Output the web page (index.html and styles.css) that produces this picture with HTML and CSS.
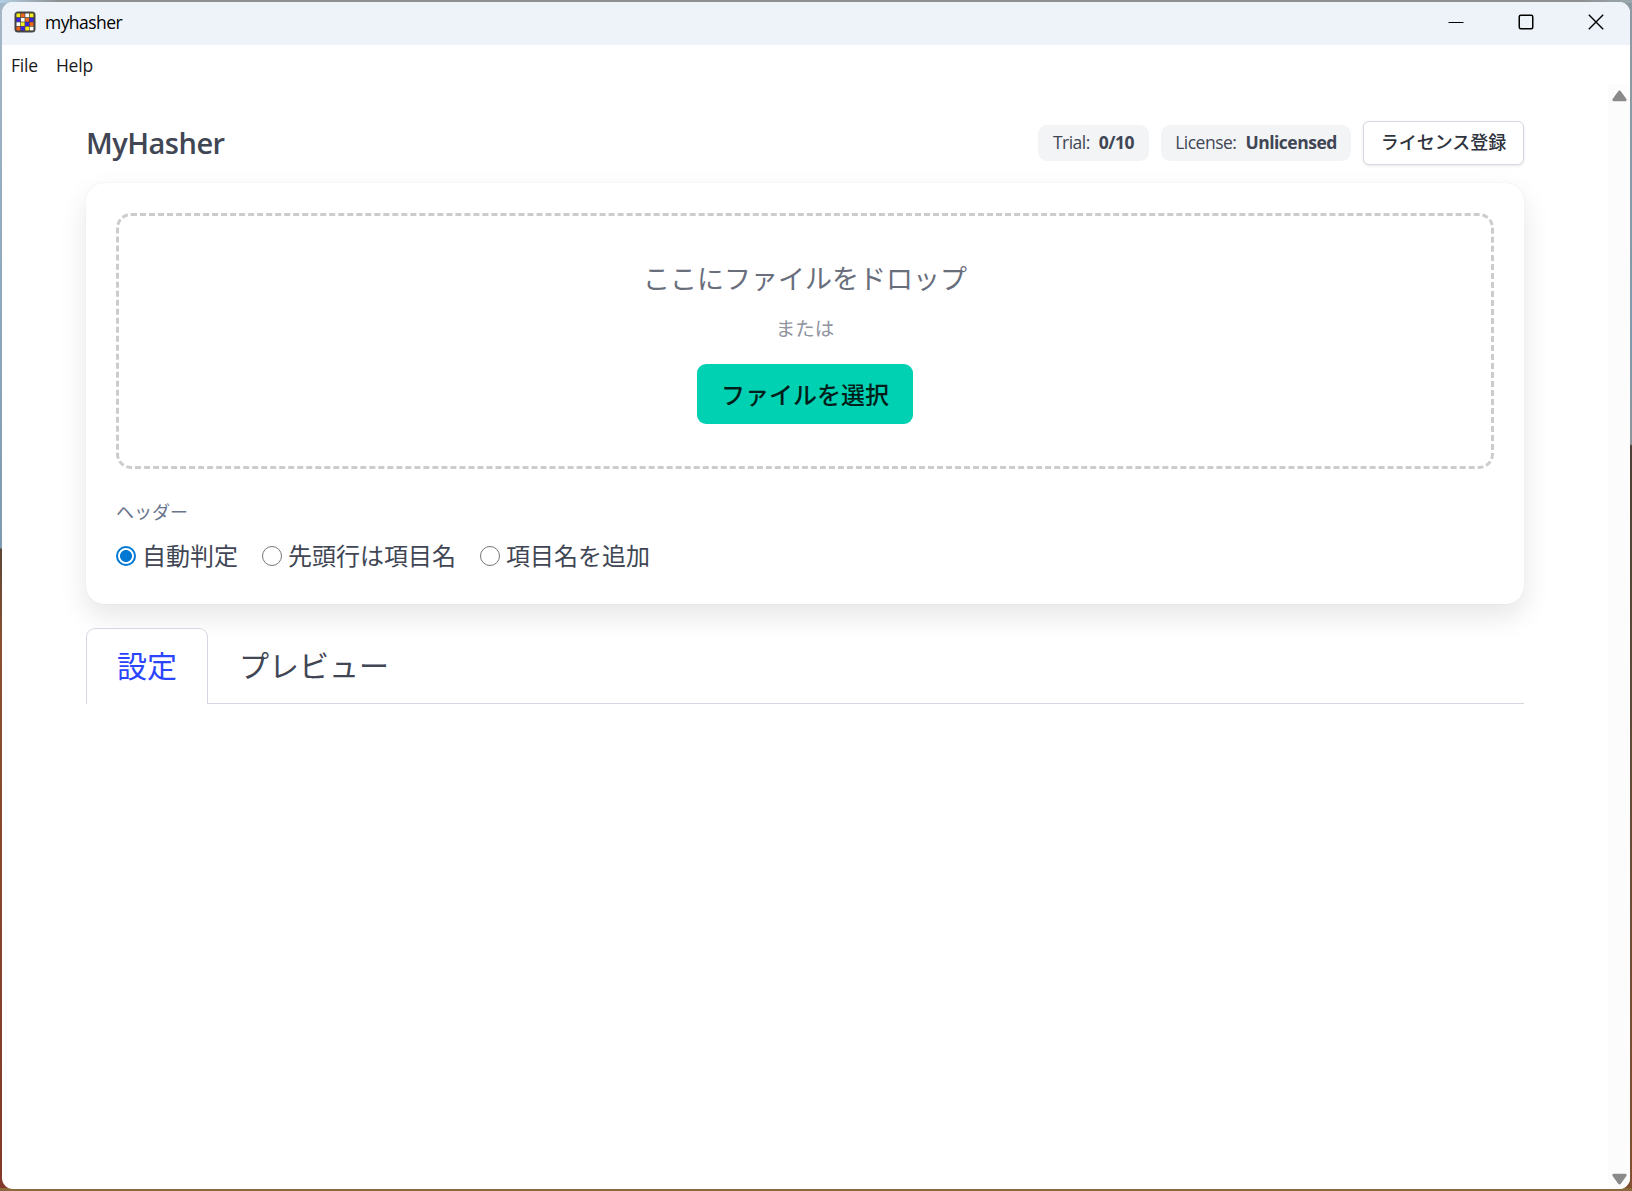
FILE: index.html
```
<!DOCTYPE html>
<html lang="ja">
<head>
    <meta charset="UTF-8">
    <meta name="viewport" content="width=device-width, initial-scale=1.0">
    <title>myhasher</title>
    <link rel="stylesheet" href="styles.css">
</head>
<body>
    <div class="window">
        <header class="titlebar">
            <svg class="app-icon" width="22" height="22" viewBox="0 0 22 22">
                <rect x="0.5" y="0.5" width="21" height="21" rx="3.5" fill="#444"/>
                <g fill="#f4ee1c">
                    <rect x="2.5" y="2.5" width="3.7" height="3.7"/>
                    <rect x="15.7" y="2.5" width="3.7" height="3.7"/>
                    <rect x="6.9" y="11.3" width="3.7" height="3.7"/>
                    <rect x="11.3" y="15.7" width="3.7" height="3.7"/>
                </g>
                <g fill="#f26419">
                    <rect x="6.9" y="2.5" width="3.7" height="3.7"/>
                    <rect x="11.3" y="6.9" width="3.7" height="3.7"/>
                    <rect x="15.7" y="11.3" width="3.7" height="3.7"/>
                    <rect x="2.5" y="15.7" width="3.7" height="3.7"/>
                </g>
                <g fill="#3a22e8">
                    <rect x="2.5" y="6.9" width="3.7" height="3.7"/>
                    <rect x="15.7" y="6.9" width="3.7" height="3.7"/>
                    <rect x="11.3" y="11.3" width="3.7" height="3.7"/>
                    <rect x="6.9" y="15.7" width="3.7" height="3.7"/>
                </g>
                <g fill="#fff">
                    <rect x="11.3" y="2.5" width="3.7" height="3.7"/>
                    <rect x="6.9" y="6.9" width="3.7" height="3.7"/>
                    <rect x="2.5" y="11.3" width="3.7" height="3.7"/>
                    <rect x="15.7" y="15.7" width="3.7" height="3.7"/>
                </g>
            </svg>
            <span class="app-name">myhasher</span>
            <div class="controls">
                <svg width="16" height="16" viewBox="0 0 16 16"><path d="M0.5 8.5h15" stroke="#000" stroke-width="1"/></svg>
                <svg width="16" height="16" viewBox="0 0 16 16"><rect x="1.25" y="1.25" width="13.5" height="13.5" rx="1.5" fill="none" stroke="#000" stroke-width="1.5"/></svg>
                <svg width="16" height="16" viewBox="0 0 16 16"><path d="M0.8 0.8l14.4 14.4M15.2 0.8L0.8 15.2" stroke="#000" stroke-width="1.4"/></svg>
            </div>
        </header>
        <nav class="menubar">
            <span>File</span>
            <span>Help</span>
        </nav>
        <div class="viewport">
            <main>
                <div class="head">
                    <h1>MyHasher</h1>
                    <div class="status">
                        <span class="tag trial">Trial: <strong>0/10</strong></span>
                        <span class="tag license">License: <strong>Unlicensed</strong></span>
                        <button class="button-license">ライセンス登録</button>
                    </div>
                </div>
                <section class="card">
                    <div class="dropzone">
                        <p class="drop-text">ここにファイルをドロップ</p>
                        <p class="drop-or">または</p>
                        <button class="button-file">ファイルを選択</button>
                    </div>
                    <div class="field-label">ヘッダー</div>
                    <div class="radios">
                        <label><input type="radio" name="header" checked>自動判定</label>
                        <label><input type="radio" name="header">先頭行は項目名</label>
                        <label><input type="radio" name="header">項目名を追加</label>
                    </div>
                </section>
                <div class="tabs">
                    <a class="tab active">設定</a>
                    <a class="tab">プレビュー</a>
                </div>
            </main>
            <div class="scrollbar">
                <svg width="15" height="12" viewBox="0 0 15 12"><path d="M6.2 1.2L0.6 9C0 10 0.5 11.2 1.8 11.2h11.4c1.3 0 1.8-1.2 1.2-2.2L8.8 1.2c-0.7-1-1.9-1-2.6 0z" fill="#8a8a8a"/></svg>
                <svg width="15" height="12" viewBox="0 0 15 12"><path d="M6.2 10.8L0.6 3C0 2 0.5 0.8 1.8 0.8h11.4c1.3 0 1.8 1.2 1.2 2.2l-5.6 7.8c-0.7 1-1.9 1-2.6 0z" fill="#8a8a8a"/></svg>
            </div>
        </div>
    </div>
</body>
</html>
```
FILE: styles.css
```
* {
    box-sizing: border-box;
}
body {
    margin: 0;
    padding: 2px;
    height: 1191px;
    overflow: hidden;
    font-family: "Open Sans", "Noto Sans CJK JP", sans-serif;
    color: #404654;
    background:
        linear-gradient(90deg, #b3cfe4, #8d8f90 60px, #8d8f90 1580px, #9aa9b0) top / 100% 3px no-repeat,
        linear-gradient(#8a6a3a, #8a6a3a) bottom / 100% 3px no-repeat,
        linear-gradient(#a4b8c8, #7d9ab0 548px, #5c4636 549px, #8a5030 640px, #82392b) left / 50% 100% no-repeat,
        linear-gradient(#8d9aa2, #7f9cae 340px, #8b9499 444px, #4d4034 446px, #5a4a38 700px, #825030) right / 50% 100% no-repeat;
}
.window {
    display: flex;
    flex-direction: column;
    height: 1187px;
    border-radius: 11px;
    overflow: hidden;
    background: #fff;
}
.titlebar {
    display: flex;
    align-items: center;
    height: 43px;
    padding: 0 19px 3px 12px;
    background: #eef3f9;
    color: #000;
    font-size: 17.5px;
}
.app-name {
    margin-left: 9px;
    letter-spacing: -0.55px;
}
.controls {
    display: flex;
    gap: 54px;
    margin-left: auto;
    padding-right: 7px;
}
.controls svg {
    display: block;
}
.menubar {
    display: flex;
    gap: 18px;
    height: 39px;
    padding: 0 9px;
    line-height: 40px;
    color: #1a1a1a;
    font-size: 17.5px;
    letter-spacing: -0.2px;
}
.viewport {
    display: flex;
    flex: 1;
}
main {
    flex: 1;
    padding: 37px 84px 0;
}
.scrollbar {
    display: flex;
    flex-direction: column;
    justify-content: space-between;
    align-items: center;
    width: 22px;
    padding: 6px 0 4px;
    background: #fcfcfc;
}
.head {
    display: flex;
    justify-content: space-between;
    align-items: center;
    height: 44px;
    margin-bottom: 18px;
}
h1 {
    margin: 0;
    padding-bottom: 2px;
    font-size: 29px;
    font-weight: 600;
    letter-spacing: -0.5px;
}
.status {
    display: flex;
    align-items: center;
    gap: 12px;
}
.tag {
    display: flex;
    align-items: center;
    justify-content: center;
    gap: 9px;
    height: 36px;
    padding-bottom: 2px;
    border-radius: 9px;
    background: #f3f4f6;
    font-size: 17.5px;
    letter-spacing: -0.5px;
}
.trial {
    width: 111px;
}
.license {
    width: 190px;
}
button {
    font-family: inherit;
    font-weight: 500;
}
.button-license {
    width: 161px;
    height: 44px;
    padding: 0 0 5px;
    border: 1px solid #d5d8e1;
    border-radius: 6px;
    background: #fff;
    box-shadow: 0 1px 3px rgba(0, 0, 0, 0.1);
    color: #2e333d;
    font-size: 18px;
}
.card {
    height: 421px;
    padding: 30px;
    border-radius: 18px;
    background: #fff;
    box-shadow: 0 12px 28px rgba(0, 0, 0, 0.1), 0 0 1px rgba(0, 0, 0, 0.12);
}
.dropzone {
    display: flex;
    flex-direction: column;
    align-items: center;
    height: 256px;
    padding-top: 43px;
    border: 3px dashed #cccccc;
    border-radius: 15px;
}
.dropzone p {
    margin: 0;
}
.drop-text {
    color: #696e7d;
    font-size: 27px;
    line-height: 40px;
}
.dropzone .drop-or {
    margin-top: 15px;
    color: #8f949f;
    font-size: 19.5px;
    line-height: 30px;
}
.button-file {
    width: 216px;
    height: 60px;
    margin-top: 20px;
    padding: 0 0 2px;
    border: none;
    border-radius: 9px;
    background: #00d1b2;
    color: #001f1a;
    font-size: 24px;
}
.field-label {
    margin-top: 30px;
    color: #69748c;
    font-size: 18px;
    line-height: 27px;
}
.radios {
    display: flex;
    gap: 24px;
    margin-top: 12px;
    font-size: 24px;
    line-height: 36px;
}
.radios label {
    display: flex;
    align-items: center;
}
.radios input {
    appearance: none;
    width: 20px;
    height: 20px;
    margin: 0 6px 1px 0;
    border: 1.5px solid #767676;
    border-radius: 50%;
    background: #fff;
}
.radios input:checked {
    border: 2px solid #0078d4;
    background: radial-gradient(circle, #0078d4 5.6px, #fff 6.3px);
}
.tabs {
    display: flex;
    height: 76px;
    margin-top: 24px;
    background: linear-gradient(#d5d8e1, #d5d8e1) bottom / 100% 1px no-repeat;
    font-size: 30px;
    line-height: 74px;
}
.tab {
    padding: 1px 31px 0;
}
.tab.active {
    padding: 0 30px;
    border: 1px solid #d5d8e1;
    border-bottom: none;
    border-radius: 9px 9px 0 0;
    background: #fff;
    color: #2b45ff;
}
```
